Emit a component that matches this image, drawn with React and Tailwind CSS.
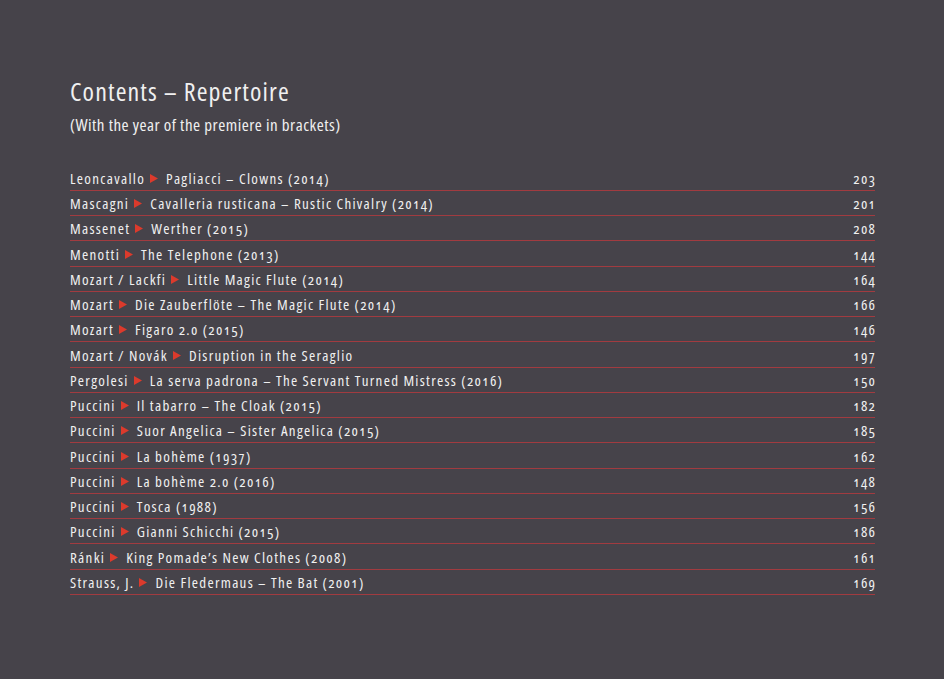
const rows = [
  ["Leoncavallo", "Pagliacci – Clowns (2014)", "203"],
  ["Mascagni", "Cavalleria rusticana – Rustic Chivalry (2014)", "201"],
  ["Massenet", "Werther (2015)", "208"],
  ["Menotti", "The Telephone (2013)", "144"],
  ["Mozart / Lackfi", "Little Magic Flute (2014)", "164"],
  ["Mozart", "Die Zauberflöte – The Magic Flute (2014)", "166"],
  ["Mozart", "Figaro 2.0 (2015)", "146"],
  ["Mozart / Novák", "Disruption in the Seraglio", "197"],
  ["Pergolesi", "La serva padrona – The Servant Turned Mistress (2016)", "150"],
  ["Puccini", "Il tabarro – The Cloak (2015)", "182"],
  ["Puccini", "Suor Angelica – Sister Angelica (2015)", "185"],
  ["Puccini", "La bohème (1937)", "162"],
  ["Puccini", "La bohème 2.0 (2016)", "148"],
  ["Puccini", "Tosca (1988)", "156"],
  ["Puccini", "Gianni Schicchi (2015)", "186"],
  ["Ránki", "King Pomade’s New Clothes (2008)", "161"],
  ["Strauss, J.", "Die Fledermaus – The Bat (2001)", "169"],
];

function Arrow() {
  return (
    <svg width="8" height="9" viewBox="0 0 8 9" className="ml-[5px] mr-[8px] shrink-0">
      <path d="M0 0 L8 4.5 L0 9 Z" fill="#dc3a2c" />
    </svg>
  );
}

export default function App() {
  return (
    <div className="min-h-[679px] bg-[#46434a] text-[#f0f0f0] font-['Open_Sans',sans-serif] [font-variant-numeric:oldstyle-nums] pl-[70px] pt-[76px]">
      <div className="w-[805px]">
        <h1 className="text-[26px] leading-[30px] font-normal font-stretch-[75%] tracking-[1.1px]">
          Contents – Repertoire
        </h1>
        <p className="mt-[8px] text-[17px] leading-[22px] font-stretch-[75%] tracking-[0.5px]">
          (With the year of the premiere in brackets)
        </p>
        <div className="mt-[30px] flex flex-col">
          {rows.map(([composer, title, page], i) => (
            <div
              key={i}
              className="flex items-center h-[25px] [&:nth-child(4n)]:h-[26px] pt-px border-b border-[#a13b40] text-[15px] font-stretch-[75%] tracking-[1.3px]"
            >
              <span>{composer}</span>
              <Arrow />
              <span>{title}</span>
              <span className="ml-auto -mr-[1.3px]">{page}</span>
            </div>
          ))}
        </div>
      </div>
    </div>
  );
}
